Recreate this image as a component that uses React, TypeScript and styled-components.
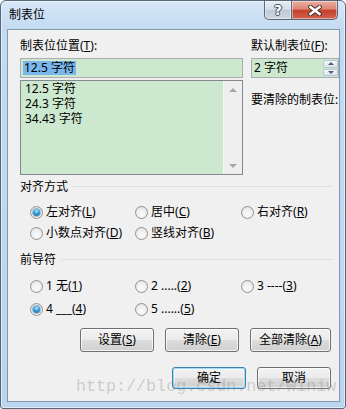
import styled, { createGlobalStyle } from "styled-components";

const GlobalStyle = createGlobalStyle`
  html, body {
    margin: 0;
    padding: 0;
    background: #ffffff;
  }
  body {
    font-family: "Noto Sans", "Noto Sans CJK SC", sans-serif;
    font-size: 12px;
    color: #000;
  }
`;

const Window = styled.div`
  position: relative;
  width: 346px;
  height: 409px;
  box-sizing: border-box;
  border: 1px solid #56677a;
  border-radius: 6px 6px 3px 3px;
  background: linear-gradient(180deg, #d6e7f7 0%, #c2daf2 30px, #bcd5ee 100%);
  box-shadow: inset 0 0 0 1px rgba(255, 255, 255, 0.5);
  padding: 0 5px 6px 6px;
  display: flex;
  flex-direction: column;
  overflow: hidden;
`;

const TitleBar = styled.div`
  height: 28px;
  display: flex;
  align-items: flex-start;
`;

const TitleText = styled.div`
  flex: 1;
  padding: 6px 0 0 2px;
  line-height: 16px;
  font-size: 12px;
  color: #000;
`;

type CaptionKind = "help" | "close";

const CaptionButton = styled.div<{ $kind: CaptionKind }>`
  height: 19px;
  width: ${(p) => (p.$kind === "close" ? "47px" : "27px")};
  box-sizing: border-box;
  border: 1px solid #5a6878;
  border-top: none;
  border-right: ${(p) => (p.$kind === "help" ? "none" : "1px solid #5a6878")};
  border-radius: ${(p) => (p.$kind === "help" ? "0 0 0 5px" : "0 0 5px 0")};
  margin-right: ${(p) => (p.$kind === "close" ? "2px" : "0")};
  background: ${(p) =>
    p.$kind === "close"
      ? "linear-gradient(180deg, #eab0a4 0%, #de8473 45%, #c4412c 52%, #d4644e 100%)"
      : "linear-gradient(180deg, #e6edf4 0%, #d6dfe9 45%, #bfcbd8 52%, #ccd7e3 100%)"};
  box-shadow: inset 0 0 0 1px rgba(255, 255, 255, 0.45);
  display: flex;
  align-items: center;
  justify-content: center;
`;

const HelpGlyph = styled.span`
  font-family: "DejaVu Sans", sans-serif;
  font-weight: bold;
  font-size: 14px;
  line-height: 14px;
  color: #fff;
  text-shadow: 1px 0 0 #3a4a5e, -1px 0 0 #3a4a5e, 0 1px 0 #3a4a5e, 0 -1px 0 #3a4a5e;
`;

const Client = styled.div`
  flex: 1;
  box-sizing: border-box;
  border: 1px solid #8598ad;
  background: #f0f0f0;
  padding: 8px 6px 11px 6px;
  display: flex;
  flex-direction: column;
`;

const TopSection = styled.div`
  display: grid;
  grid-template-columns: 223px 88px;
  column-gap: 8px;
  padding-left: 6px;
`;

const Column = styled.div`
  display: flex;
  flex-direction: column;
`;

const Label = styled.div<{ $gap?: number }>`
  line-height: 16px;
  height: 16px;
  white-space: nowrap;
  margin-top: ${(p) => p.$gap ?? 0}px;
`;

const TextBox = styled.div`
  margin-top: 4px;
  height: 20px;
  box-sizing: border-box;
  border: 1px solid #abadb3;
  background: #cce8cf;
  padding: 0 2px;
  display: flex;
  align-items: center;
`;

const Selection = styled.span`
  background: #7ab6ea;
  line-height: 14px;
  padding: 0 1px;
`;

const ListBox = styled.div`
  margin-top: 2px;
  height: 95px;
  box-sizing: border-box;
  border: 1px solid #828790;
  background: #cce8cf;
  display: flex;
`;

const ListItems = styled.div`
  flex: 1;
  padding: 1px 4px;
  display: flex;
  flex-direction: column;
`;

const ListItem = styled.div`
  height: 15px;
  line-height: 14px;
  white-space: nowrap;
`;

const ScrollBar = styled.div`
  width: 18px;
  background: #eeeeee;
  border-left: 1px solid #f6f6f6;
  display: flex;
  flex-direction: column;
  justify-content: space-between;
`;

const ScrollArrow = styled.div<{ $dir: "up" | "down" }>`
  height: 17px;
  display: flex;
  align-items: center;
  justify-content: center;
  &::after {
    content: "";
    width: 0;
    height: 0;
    border-left: 4px solid transparent;
    border-right: 4px solid transparent;
    border-${(p) => (p.$dir === "up" ? "bottom" : "top")}: 4px solid #a8a8a8;
  }
`;

const SpinBox = styled.div`
  margin-top: 4px;
  height: 20px;
  box-sizing: border-box;
  border: 1px solid #abadb3;
  background: #cce8cf;
  display: flex;
  align-items: center;
  padding-left: 2px;
`;

const SpinValue = styled.span`
  flex: 1;
  line-height: 14px;
`;

const SpinButtons = styled.div`
  align-self: stretch;
  width: 15px;
  padding: 1px 0;
  display: flex;
  flex-direction: column;
  gap: 1px;
`;

const SpinButton = styled.div<{ $dir: "up" | "down" }>`
  flex: 1;
  box-sizing: border-box;
  border: 1px solid #b8c4d2;
  border-radius: 2px;
  background: linear-gradient(180deg, #f8f9fb 0%, #e9edf2 50%, #dde3ea 100%);
  display: flex;
  align-items: center;
  justify-content: center;
  &::after {
    content: "";
    width: 0;
    height: 0;
    border-left: 3px solid transparent;
    border-right: 3px solid transparent;
    border-${(p) => (p.$dir === "up" ? "bottom" : "top")}: 3px solid #4d5e78;
  }
`;

const GroupHeader = styled.div<{ $gap: number }>`
  margin-top: ${(p) => p.$gap}px;
  padding-left: 6px;
  height: 16px;
  display: flex;
  align-items: center;
  gap: 5px;
  line-height: 16px;
  &::after {
    content: "";
    flex: 1;
    height: 1px;
    margin: 0 1px 2px 0;
    background: #d7dfe7;
  }
`;

const RadioGrid = styled.div<{ $gap: number; $rowGap: number }>`
  margin-top: ${(p) => p.$gap}px;
  padding-left: 16px;
  display: grid;
  grid-template-columns: 105px 106px 1fr;
  grid-auto-rows: 20px;
  row-gap: ${(p) => p.$rowGap}px;
`;

const RadioItem = styled.label`
  display: flex;
  align-items: center;
  gap: 3px;
  white-space: nowrap;
  line-height: 16px;
`;

const RadioCircle = styled.span<{ $checked?: boolean }>`
  width: 13px;
  height: 13px;
  box-sizing: border-box;
  border-radius: 50%;
  border: 1px solid #939393;
  background: radial-gradient(circle at 50% 65%, #fbfbfb 0%, #f1f1f1 45%, #d9d9d9 100%);
  display: flex;
  align-items: center;
  justify-content: center;
  flex-shrink: 0;
  &::after {
    content: "";
    width: 7px;
    height: 7px;
    border-radius: 50%;
    display: ${(p) => (p.$checked ? "block" : "none")};
    background: radial-gradient(circle at 50% 30%, #b5ecff 0%, #3aa6e6 40%, #10558f 100%);
    box-shadow: 0 0 0 1px rgba(30, 80, 130, 0.35);
  }
`;

const ButtonRow = styled.div<{ $gap: number }>`
  margin-top: ${(p) => p.$gap}px;
  display: flex;
  justify-content: flex-end;
  gap: 11px;
  padding-right: 2px;
`;

const Button = styled.button<{ $width?: number; $height: number; $default?: boolean }>`
  width: ${(p) => p.$width ?? 74}px;
  height: ${(p) => p.$height}px;
  box-sizing: border-box;
  padding: 0;
  font-family: inherit;
  font-size: 12px;
  line-height: 16px;
  color: #000;
  border: 1px solid ${(p) => (p.$default ? "#3c7fb1" : "#707070")};
  border-radius: 3px;
  background: linear-gradient(180deg, #f2f2f2 0%, #ebebeb 48%, #dddddd 52%, #cfcfcf 100%);
  box-shadow: ${(p) =>
    p.$default
      ? "inset 0 0 0 1px #9fdcf8, inset 0 0 0 2px rgba(255,255,255,0.4)"
      : "inset 0 0 0 1px rgba(255,255,255,0.75)"};
`;

const Watermark = styled.div`
  position: absolute;
  left: 75px;
  top: 378px;
  font-family: "Liberation Mono", monospace;
  font-size: 16.7px;
  line-height: 16.7px;
  color: rgba(140, 140, 140, 0.38);
  white-space: nowrap;
  pointer-events: none;
`;

function Mn({ text, k }: { text: string; k: string }) {
  return (
    <>
      {text}(<u>{k}</u>)
    </>
  );
}

function Radio({ text, k, checked }: { text: string; k: string; checked?: boolean }) {
  return (
    <RadioItem>
      <RadioCircle $checked={checked} />
      <span>
        <Mn text={text} k={k} />
      </span>
    </RadioItem>
  );
}

function CloseGlyph() {
  return (
    <svg width="14" height="11" viewBox="0 0 14 11">
      <path d="M2.5 2 L11.5 9 M11.5 2 L2.5 9" stroke="#3b2a28" strokeWidth="4.4" strokeLinecap="square" />
      <path d="M2.5 2 L11.5 9 M11.5 2 L2.5 9" stroke="#ffffff" strokeWidth="2.6" strokeLinecap="square" />
    </svg>
  );
}

export default function App() {
  return (
    <>
      <GlobalStyle />
      <Window>
        <TitleBar>
          <TitleText>制表位</TitleText>
          <CaptionButton $kind="help">
            <HelpGlyph>?</HelpGlyph>
          </CaptionButton>
          <CaptionButton $kind="close">
            <CloseGlyph />
          </CaptionButton>
        </TitleBar>
        <Client>
          <TopSection>
            <Column>
              <Label>
                制表位位置(<u>T</u>):
              </Label>
              <TextBox>
                <Selection>12.5 字符</Selection>
              </TextBox>
              <ListBox>
                <ListItems>
                  <ListItem>12.5 字符</ListItem>
                  <ListItem>24.3 字符</ListItem>
                  <ListItem>34.43 字符</ListItem>
                </ListItems>
                <ScrollBar>
                  <ScrollArrow $dir="up" />
                  <ScrollArrow $dir="down" />
                </ScrollBar>
              </ListBox>
            </Column>
            <Column>
              <Label>
                默认制表位(<u>F</u>):
              </Label>
              <SpinBox>
                <SpinValue>2 字符</SpinValue>
                <SpinButtons>
                  <SpinButton $dir="up" />
                  <SpinButton $dir="down" />
                </SpinButtons>
              </SpinBox>
              <Label $gap={14}>要清除的制表位:</Label>
            </Column>
          </TopSection>

          <GroupHeader $gap={4}>对齐方式</GroupHeader>
          <RadioGrid $gap={7} $rowGap={1}>
            <Radio text="左对齐" k="L" checked />
            <Radio text="居中" k="C" />
            <Radio text="右对齐" k="R" />
            <Radio text="小数点对齐" k="D" />
            <Radio text="竖线对齐" k="B" />
          </RadioGrid>

          <GroupHeader $gap={9}>前导符</GroupHeader>
          <RadioGrid $gap={8} $rowGap={3}>
            <Radio text="1 无" k="1" />
            <Radio text="2 ....." k="2" />
            <Radio text="3 ----" k="3" />
            <Radio text="4 ___" k="4" checked />
            <Radio text="5 ......" k="5" />
          </RadioGrid>

          <ButtonRow $gap={9}>
            <Button $height={24}>
              <Mn text="设置" k="S" />
            </Button>
            <Button $height={24}>
              <Mn text="清除" k="E" />
            </Button>
            <Button $height={24} $width={81}>
              <Mn text="全部清除" k="A" />
            </Button>
          </ButtonRow>
          <ButtonRow $gap={15}>
            <Button $height={22} $default>
              确定
            </Button>
            <Button $height={22}>取消</Button>
          </ButtonRow>
        </Client>
        <Watermark>http://blog.csdn.net/Winiw</Watermark>
      </Window>
    </>
  );
}
